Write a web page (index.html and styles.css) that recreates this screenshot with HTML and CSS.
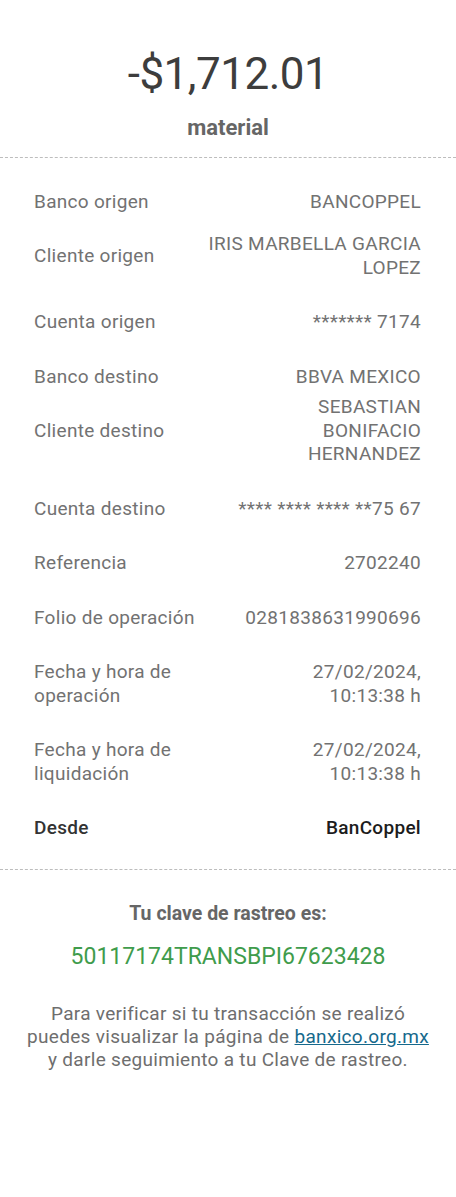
FILE: index.html
```html
<!DOCTYPE html>
<html lang="es">
<head>
    <meta charset="UTF-8">
    <title>Comprobante</title>
    <meta name="viewport" content="width=device-width, initial-scale=1.0">
    <link rel="stylesheet" href="styles.css">
</head>
<body>
    <div class="receipt">
        <div class="header">
            <div class="amount">-$1,712.01</div>
            <div class="concept">material</div>
        </div>
        <div class="details">
            <div class="row">
                <div class="label">Banco origen</div>
                <div class="value">BANCOPPEL</div>
            </div>
            <div class="row lines2">
                <div class="label">Cliente origen</div>
                <div class="value">IRIS MARBELLA GARCIA<br>LOPEZ</div>
            </div>
            <div class="row">
                <div class="label">Cuenta origen</div>
                <div class="value">******* 7174</div>
            </div>
            <div class="row">
                <div class="label">Banco destino</div>
                <div class="value">BBVA MEXICO</div>
            </div>
            <div class="row lines3">
                <div class="label">Cliente destino</div>
                <div class="value">SEBASTIAN<br>BONIFACIO<br>HERNANDEZ</div>
            </div>
            <div class="row">
                <div class="label">Cuenta destino</div>
                <div class="value">**** **** **** **75 67</div>
            </div>
            <div class="row">
                <div class="label">Referencia</div>
                <div class="value">2702240</div>
            </div>
            <div class="row">
                <div class="label">Folio de operación</div>
                <div class="value">0281838631990696</div>
            </div>
            <div class="row">
                <div class="label">Fecha y hora de<br>operación</div>
                <div class="value">27/02/2024,<br>10:13:38 h</div>
            </div>
            <div class="row">
                <div class="label">Fecha y hora de<br>liquidación</div>
                <div class="value">27/02/2024,<br>10:13:38 h</div>
            </div>
            <div class="row strong">
                <div class="label">Desde</div>
                <div class="value">BanCoppel</div>
            </div>
        </div>
        <div class="tracking">
            <div class="tracking-title">Tu clave de rastreo es:</div>
            <div class="tracking-code">50117174TRANSBPI67623428</div>
            <p class="tracking-note">Para verificar si tu transacción se realizó<br>puedes visualizar la página de <a href="#">banxico.org.mx</a><br>y darle seguimiento a tu Clave de rastreo.</p>
        </div>
    </div>
</body>
</html>
```

FILE: styles.css
```css
body {
    margin: 0;
    padding: 0;
    background: #fff;
    font-family: Roboto, "Liberation Sans", sans-serif;
}
.header {
    text-align: center;
    padding-top: 48px;
    padding-bottom: 16px;
    border-bottom: 1px dashed #bdbdbd;
}
.amount {
    font-size: 44px;
    line-height: 52px;
    color: #3d3d3d;
    letter-spacing: -0.5px;
}
.concept {
    margin-top: 15px;
    font-size: 22px;
    font-weight: bold;
    line-height: 26px;
    color: #666;
}
.details {
    padding: 16px 35px 14px 34px;
    border-bottom: 1px dashed #bdbdbd;
}
.row {
    display: flex;
    justify-content: space-between;
    align-items: center;
    padding: 15.5px 0;
    font-size: 19px;
    line-height: 23.5px;
    letter-spacing: 0.3px;
    color: #727272;
}
.row.lines2 {
    margin-top: -12px;
}
.row.lines3 {
    margin-top: -24px;
}
.label {
    flex-shrink: 0;
}
.value {
    text-align: right;
}
.row.strong {
    color: #333;
    font-weight: 500;
}
.row.strong .value {
    color: #1c1c1c;
}
.tracking {
    text-align: center;
    padding: 32px 10px;
}
.tracking-title {
    font-size: 19.5px;
    font-weight: bold;
    line-height: 24px;
    color: #666;
}
.tracking-code {
    margin-top: 17px;
    font-size: 23px;
    line-height: 28px;
    color: #3f9c4c;
}
.tracking-note {
    margin: 30.5px 0 0;
    font-size: 19px;
    line-height: 23px;
    letter-spacing: 0.3px;
    color: #6e6e6e;
}
.tracking-note a {
    color: #16698c;
}
```
